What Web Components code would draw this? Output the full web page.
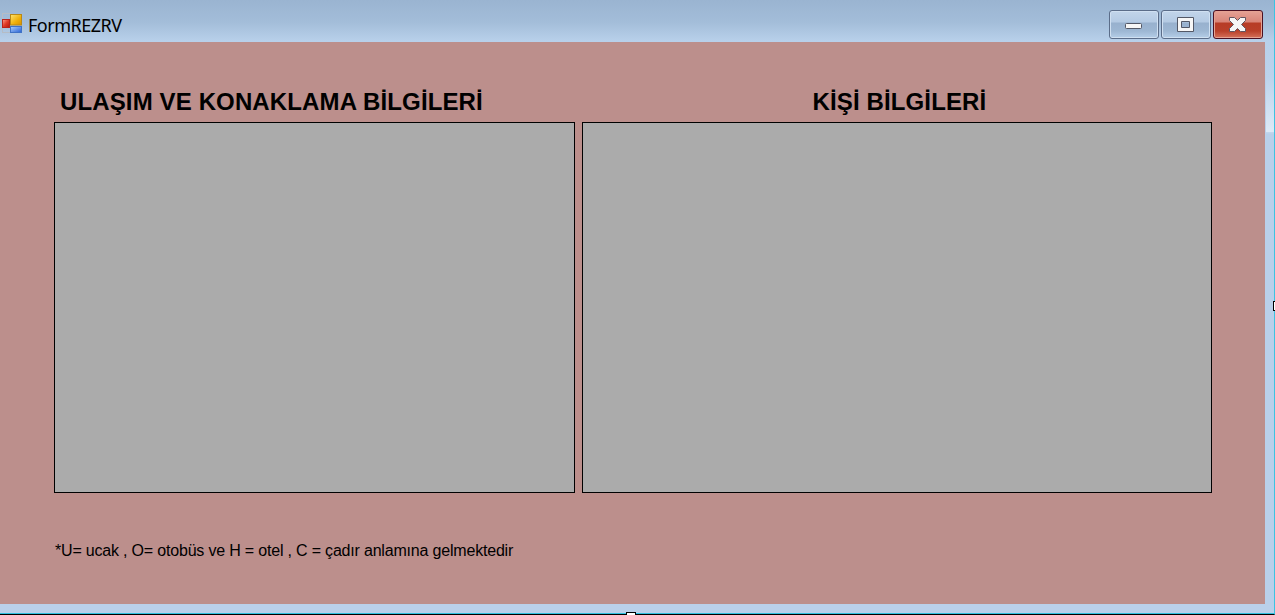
<!DOCTYPE html>
<html lang="tr"><head><meta charset="utf-8"><title>FormREZRV</title>
<style>html,body{margin:0;width:1275px;height:615px;overflow:hidden}</style></head>
<body>
<form-window>
  <title-bar slot="title">FormREZRV</title-bar>
  <data-panel style="--w:521px;--indent:6px"><span>ULAŞIM VE KONAKLAMA BİLGİLERİ</span></data-panel>
  <data-panel style="--w:630px;--indent:230.5px"><span>KİŞİ BİLGİLERİ</span></data-panel>
  <foot-note slot="note">*U= ucak , O= otobüs ve H = otel , C = çadır anlamına gelmektedir</foot-note>
</form-window>
<script>
const define = (name, html) => customElements.define(name, class extends HTMLElement {
  constructor() { super(); this.attachShadow({mode: 'open'}).innerHTML = html; }
});
define('form-window', `<style>
:host{display:grid;grid-template:42px 562px 9px/1265px 9px;box-sizing:border-box;width:1275px;height:615px;position:relative;background:#bad0ea;border-right:1px solid #3cc3e2;border-bottom:1px solid #000;box-shadow:inset 0 -1px #2fc0de}
.top{grid-column:1/3}
.client{background:#bc8f8c;display:flex;flex-direction:column;box-sizing:border-box;padding:40px 0 0 54px}
.panels{display:flex;gap:7px}
.edge{background:linear-gradient(#b8d0ea 0,#bcd3ec 35px,#dce9f6 88px,#dce9f6 90px,#c4d8ee 90px,#b9d0ea 92px);margin-left:1px}
.grip{position:absolute;box-sizing:border-box;background:#fff;border:1px solid #000}
.b{left:626px;top:612px;width:10px;height:8px}
.r{left:1273px;top:301px;width:8px;height:10px}
</style><div class="top"><slot name="title"></slot></div>
<div class="client"><div class="panels"><slot></slot></div><slot name="note"></slot></div><div class="edge"></div>
<i class="grip b"></i><i class="grip r"></i>`);
define('title-bar', `<style>
:host{display:flex;box-sizing:border-box;height:42px;padding:10px 11px 0 2px;background:linear-gradient(#9ab4d1 0,#a3bdd9 22px,#b8d0ea 41px);font:18px "Noto Sans","Open Sans",sans-serif;color:#000}
.logo{margin-top:3px;flex:none}
.name{margin:3px auto 0 5px;line-height:25px;letter-spacing:-.5px;white-space:nowrap}
.buttons{display:flex;gap:2px}
</style><svg class="logo" width="21" height="21" viewBox="0 0 21 21">
<defs><linearGradient id="r" x2="1" y2="1"><stop stop-color="#ff9c88"/><stop offset=".5" stop-color="#df3a28"/><stop offset="1" stop-color="#b41408"/></linearGradient>
<linearGradient id="y" x2="1" y2="1"><stop stop-color="#ffe46e"/><stop offset=".6" stop-color="#efaf08"/><stop offset="1" stop-color="#d99000"/></linearGradient>
<linearGradient id="u" x2="1" y2="1"><stop stop-color="#a8ceff"/><stop offset="1" stop-color="#2860d2"/></linearGradient></defs>
<path d="M0 .5H8M0 19.500H8M.5 0V20" fill="none" stroke="#b5bcc5"/>
<rect x=".5" y="6.500" width="7" height="8" fill="url(#r)" stroke="#b8231c"/>
<rect x="8.500" y="1.500" width="11" height="10.500" fill="url(#y)" stroke="#b98916"/>
<rect x="8.500" y="13.500" width="11" height="6" fill="url(#u)" stroke="#3f72c6"/></svg>
<span class="name"><slot></slot></span><div class="buttons"><caption-button kind="min"></caption-button><caption-button kind="max"></caption-button><caption-button kind="close"></caption-button></div>`);
const glyphs = {
 min:'<rect x="16.500" y="13.500" width="16" height="5" rx="1" fill="#f6f6f6" stroke="#535866"/>',
 max:'<path fill-rule="evenodd" d="M16.500 7.500h16v14h-16zM20.500 11.500v6h8v-6z" fill="#f6f6f6" stroke="#535866"/>',
 close:'<path d="M16.500 7.500H21.500L24.500 10.500L27.500 7.500H32.500V10.500L28.500 14.500L32.500 18.500V21.500H27.500L24.500 18.500L21.500 21.500H16.500V18.500L20.500 14.500L16.500 10.500Z" fill="#f6f6f6" stroke="#62545f" stroke-linejoin="round"/>'
};
customElements.define('caption-button', class extends HTMLElement {
 constructor(){ super(); this.attachShadow({mode:'open'}); }
 connectedCallback(){ this.shadowRoot.innerHTML=`<style>
:host{display:block;box-sizing:border-box;width:50px;height:29px;border:1px solid #5b6d89;border-radius:3px;background:linear-gradient(#c2d5ea,#b4cae3 11px,#98b1ce 12px,#9db7d3 20px,#b5cee8);box-shadow:inset 0 0 0 1px #d0e0f1}
:host([kind=close]){border-color:#4b1022;background:linear-gradient(#e5a195,#d98578 11px,#b73c26 12px,#b9402a 20px,#d5715b);box-shadow:inset 0 0 0 1px #e5a293}
svg{display:block;margin:-1px}
</style><svg width="50" height="29" viewBox="0 0 50 29">${glyphs[this.getAttribute('kind')]}</svg>`; }
});
define('data-panel', `<style>
:host{display:block;width:var(--w);color:#000}
header{height:40px;box-sizing:border-box;padding:4px 0 0 var(--indent);font:bold 24px/32px "Liberation Sans",Arial,sans-serif;letter-spacing:.13px;white-space:nowrap}
.grid{box-sizing:border-box;height:371px;background:#ababab;border:1px solid #000}
</style><header><slot></slot></header><div class="grid"></div>`);
define('foot-note', `<style>
:host{display:block;margin-top:47px;padding-left:1px;font:16px/22px "Liberation Sans",Arial,sans-serif;letter-spacing:-.19px;color:#000;white-space:nowrap}
</style><slot></slot>`);
</script></body></html>
